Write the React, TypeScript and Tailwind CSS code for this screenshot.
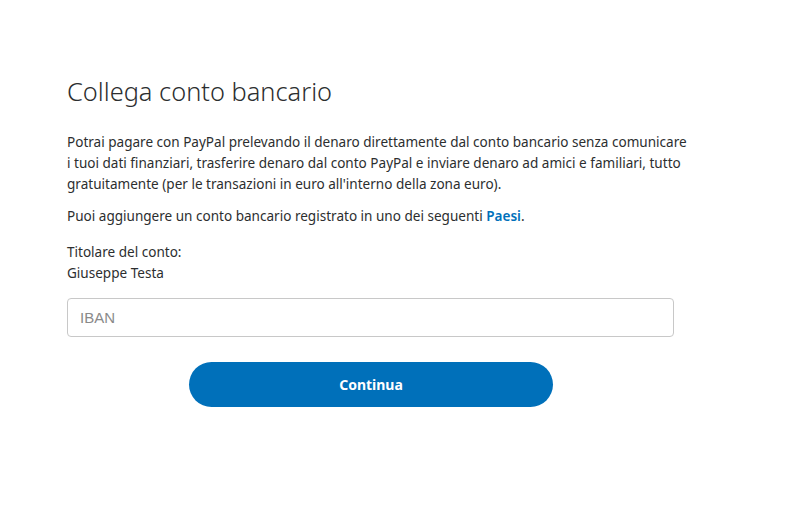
import React from "react";

const App: React.FC = () => {
  return (
    <div className="min-h-[514px] w-full bg-white text-[#2c2e2f] font-['Noto_Sans',sans-serif]">
      <div className="pl-[67px] pt-[73px] w-[740px]">
        <h1 className="text-[25.4px] font-light leading-[36px]">
          Collega conto bancario
        </h1>

        <p className="mt-[23px] text-[13.55px] leading-[21px] whitespace-nowrap">
          Potrai pagare con PayPal prelevando il denaro direttamente dal conto bancario senza comunicare
          <br />
          i tuoi dati finanziari, trasferire denaro dal conto PayPal e inviare denaro ad amici e familiari, tutto
          <br />
          gratuitamente (per le transazioni in euro all'interno della zona euro).
        </p>

        <p className="mt-[11px] text-[13.55px] leading-[21px]">
          Puoi aggiungere un conto bancario registrato in uno dei seguenti{" "}
          <a href="#" className="text-[#0070ba] font-semibold">
            Paesi
          </a>
          .
        </p>

        <div className="mt-[15px] text-[13.55px] leading-[21px]">
          <div>Titolare del conto:</div>
          <div>Giuseppe Testa</div>
        </div>

        <input
          type="text"
          placeholder="IBAN"
          className="mt-[14px] block w-[607px] h-[39px] rounded-[4px] border border-[#c8c8c8] px-[12px] text-[15px] font-['Liberation_Sans',sans-serif] placeholder:text-[#8a8a8a] outline-none"
        />

        <div className="mt-[25px] pl-[122px]">
          <button className="w-[364px] h-[45px] rounded-full bg-[#0070ba] text-white text-[14px] font-bold">
            Continua
          </button>
        </div>
      </div>
    </div>
  );
};

export default App;
